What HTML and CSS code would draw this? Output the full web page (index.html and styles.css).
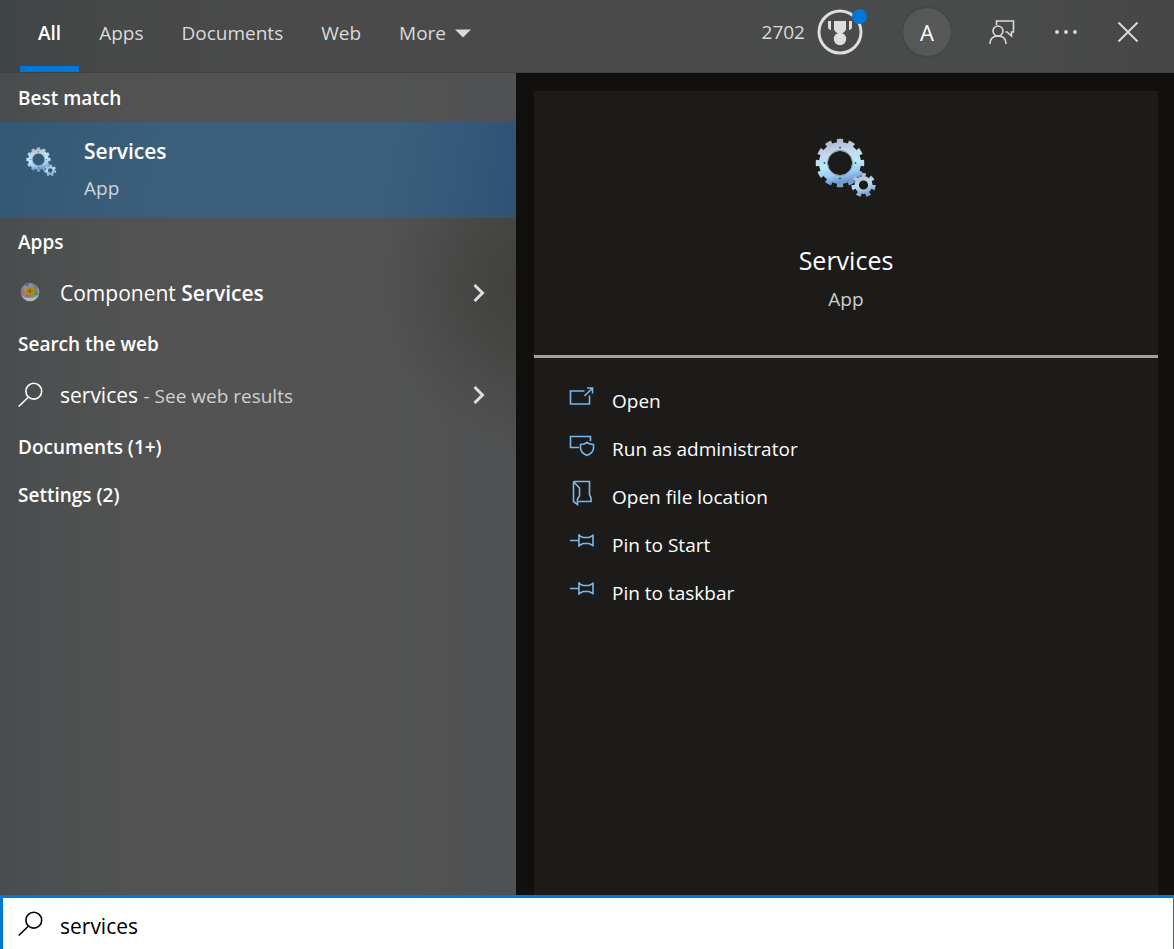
FILE: index.html
```html
<!DOCTYPE html>
<html lang="en">
<head>
<meta charset="utf-8">
<meta name="viewport" content="width=device-width, initial-scale=1">
<title>Search</title>
<link rel="stylesheet" href="styles.css">
</head>
<body>
<svg class="defs" width="0" height="0" aria-hidden="true">
  <defs>
    <linearGradient id="metal" gradientUnits="userSpaceOnUse" x1="20" y1="0" x2="30" y2="50">
      <stop offset="0" stop-color="#a9b2cc"/>
      <stop offset=".28" stop-color="#c3d6e8"/>
      <stop offset=".52" stop-color="#b9ebf8"/>
      <stop offset=".72" stop-color="#9cc8f0"/>
      <stop offset=".86" stop-color="#6f9bd3"/>
      <stop offset="1" stop-color="#86a2c0"/>
    </linearGradient>
    <linearGradient id="metal-small" gradientUnits="userSpaceOnUse" x1="44" y1="35" x2="52" y2="59">
      <stop offset="0" stop-color="#aab4cc"/>
      <stop offset=".5" stop-color="#b8dcf2"/>
      <stop offset="1" stop-color="#6f96c8"/>
    </linearGradient>
    <radialGradient id="sphere" cx=".4" cy=".3" r=".7">
      <stop offset="0" stop-color="#a8a8a8"/>
      <stop offset=".6" stop-color="#777"/>
      <stop offset="1" stop-color="#b4b4b4"/>
    </radialGradient>
    <symbol id="gears" viewBox="0 0 62 60">
      <g fill="none" stroke="url(#metal)">
        <circle cx="25" cy="25" r="16.5" stroke-width="9"/>
        <circle cx="25" cy="25" r="22" stroke-width="4.5" pathLength="24" stroke-dasharray="1.1 .9" stroke-dashoffset=".55"/>
      </g>
      <g fill="none" stroke="url(#metal-small)">
        <circle cx="48.5" cy="47" r="6.8" stroke-width="4.4"/>
        <circle cx="48.5" cy="47" r="10.2" stroke-width="3.8" pathLength="14" stroke-dasharray="1 1"/>
      </g>
      <circle cx="25" cy="25" r="12.6" fill="none" stroke="#7d97a8" stroke-width="1"/>
      <g fill="#35546a"><circle cx="25" cy="9.5" r="1"/><circle cx="25" cy="40.5" r="1"/><circle cx="9.5" cy="25" r="1"/><circle cx="40.5" cy="25" r="1"/></g>
    </symbol>
    <symbol id="lens" viewBox="0 0 26 26">
      <path d="M10 15.500.7 24.500" fill="none" stroke="currentColor" stroke-width="1.6"/>
      <circle cx="15.800" cy="9.200" r="7.900" fill="none" stroke="currentColor" stroke-width="1.6"/>
    </symbol>
    <symbol id="chevron" viewBox="0 0 12 18">
      <path d="m1.5 1 8 8-8 8" fill="none" stroke="currentColor" stroke-width="3"/>
    </symbol>
    <symbol id="pin" viewBox="0 0 26 26">
      <path d="M1 12.5h9M10 6v13M10 7.5l4 2h6l4-2M10 17.500l4-2h6l4 2M24 6.500v12" fill="none" stroke="currentColor" stroke-width="1.6"/>
    </symbol>
  </defs>
</svg>
<div class="search-window">
  <header class="topbar">
    <nav class="tabs" aria-label="Search scope">
      <button class="tab tab-active">All</button>
      <button class="tab">Apps</button>
      <button class="tab">Documents</button>
      <button class="tab">Web</button>
      <button class="tab">More <svg class="caret" viewBox="0 0 16 9" aria-hidden="true"><path d="M0 .5h16L8 8.500z" fill="currentColor"/></svg></button>
    </nav>
    <div class="account">
      <button class="rewards">2702
        <svg class="medal" viewBox="0 0 50 48" aria-hidden="true">
          <circle cx="23" cy="25" r="21" fill="none" stroke="#dedede" stroke-width="3"/>
          <path d="M17 14h12v9l-3 3h-6l-3-3zM11 14h3v9h-1l-2-2zM32 14h3v7l-2 2h-1z" fill="#dedede"/>
          <circle cx="23" cy="32" r="6.2" fill="#dedede"/>
          <circle cx="42.500" cy="9.500" r="7.500" fill="#0078d7"/>
        </svg>
      </button>
      <button class="avatar">A</button>
      <button class="tool" aria-label="Feedback"><svg class="feedback" viewBox="0 0 26 26" aria-hidden="true"><g fill="none" stroke="currentColor" stroke-width="1.600"><path d="M7.500 6V2h17v11h-2v4l-4.500-4h-1.500"/><circle cx="9" cy="12" r="5"/><path d="M1 25c0-5 3-8 8-8s8 3 8 8"/></g></svg></button>
      <button class="tool" aria-label="Options"><svg class="dots" viewBox="0 0 26 6" aria-hidden="true"><g fill="currentColor"><circle cx="4" cy="3" r="1.900"/><circle cx="13" cy="3" r="1.900"/><circle cx="22" cy="3" r="1.900"/></g></svg></button>
      <button class="tool" aria-label="Close"><svg class="close" viewBox="0 0 22 22" aria-hidden="true"><path d="m1.500 1.500 19 19m0-19-19 19" fill="none" stroke="currentColor" stroke-width="1.900"/></svg></button>
    </div>
  </header>

  <main class="content">
    <section class="results" aria-label="Results">
      <h2 class="group">Best match</h2>
      <button class="best">
        <svg class="gears-small" aria-hidden="true"><use href="#gears"/></svg>
        <span class="best-text"><strong>Services</strong><span class="kind">App</span></span>
      </button>
      <h2 class="group">Apps</h2>
      <button class="result">
        <svg class="component" viewBox="0 0 20 20" aria-hidden="true">
          <circle cx="10" cy="10" r="9.300" fill="url(#sphere)"/>
          <path d="M2 14a9 9 0 0 0 16 0c-4 3-12 3-16 0" fill="#b8b8b8"/>
          <circle cx="10" cy="9" r="4.500" fill="#b48a18"/><path d="M10 6v6M7 9h6" stroke="#7a5b0e"/>
          <circle cx="7" cy="2.800" r="2" fill="#6064c8"/><circle cx="4" cy="12.500" r="1.700" fill="#d66"/><circle cx="16.500" cy="11.500" r="1.900" fill="#36a146"/>
        </svg>
        <span class="result-text">Component <strong>Services</strong></span>
        <svg class="chevron" aria-hidden="true"><use href="#chevron"/></svg>
      </button>
      <h2 class="group">Search the web</h2>
      <button class="result">
        <svg class="lens" aria-hidden="true"><use href="#lens"/></svg>
        <span class="result-text">services <span class="hint">- See web results</span></span>
        <svg class="chevron" aria-hidden="true"><use href="#chevron"/></svg>
      </button>
      <h2 class="group">Documents (1+)</h2>
      <h2 class="group">Settings (2)</h2>
    </section>

    <section class="preview" aria-label="Services">
      <div class="card">
        <div class="summary">
          <svg class="gears-large" aria-hidden="true"><use href="#gears"/></svg>
          <h1 class="title">Services</h1>
          <p class="subtitle">App</p>
        </div>
        <div class="actions">
          <button class="action"><svg class="action-icon" viewBox="0 0 26 26" aria-hidden="true"><path d="M15.500 7H1.500v13h19v-8.500M15.500 12l8-8M18 4h5.500v5.500" fill="none" stroke="currentColor" stroke-width="1.600"/></svg>Open</button>
          <button class="action"><svg class="action-icon" viewBox="0 0 26 26" aria-hidden="true"><path d="M10 15.500H1.500v-11H21.500V9M18 10.500c-2 1.500-4 2-6.500 2v3.500c0 3.500 3 6 6.500 7.500 3.500-1.500 6.500-4 6.500-7.500v-3.500c-2.500 0-4.500-.5-6.500-2z" fill="none" stroke="currentColor" stroke-width="1.600"/></svg>Run as administrator</button>
          <button class="action"><svg class="action-icon" viewBox="0 0 26 26" aria-hidden="true"><path d="M4.500 1.500h16v13l1.500 3.500V21.500H9.500M4.500 1.500v20L8.500 24.500V19l2-3V8l-6-6.500" fill="none" stroke="currentColor" stroke-width="1.600"/></svg>Open file location</button>
          <button class="action"><svg class="action-icon" aria-hidden="true"><use href="#pin"/></svg>Pin to Start</button>
          <button class="action"><svg class="action-icon" aria-hidden="true"><use href="#pin"/></svg>Pin to taskbar</button>
        </div>
      </div>
    </section>
  </main>

  <label class="searchbox">
    <svg class="lens" aria-hidden="true"><use href="#lens"/></svg>
    <input class="query" type="text" value="services" aria-label="Search">
  </label>
</div>
</body>
</html>
```
FILE: styles.css
```css
* { box-sizing: border-box; }

body {
  margin: 0;
  font-family: "Open Sans", "Noto Sans", sans-serif;
  font-size: 19px;
  line-height: 24px;
  color: #fff;
}

button {
  margin: 0;
  padding: 0;
  border: 0;
  background: none;
  color: inherit;
  font: inherit;
  text-align: left;
}

h1, h2, p { margin: 0; }
strong { font-weight: 600; }
svg { display: block; flex: none; }
.defs { position: absolute; }

.search-window {
  display: flex;
  flex-direction: column;
  min-height: 100vh;
  background: #525252;
}

.topbar {
  display: flex;
  justify-content: space-between;
  height: 73px;
  padding: 0 35px 0 20px;
  border-bottom: 1px solid #414141;
  background: linear-gradient(90deg, #3f4445 0, #474848 110px, #4a4a4a 300px, #4a4a4a 700px, #494b4a 1000px, #464646 100%);
  color: #dadada;
}

.tabs { display: flex; gap: 2px; }

.tab {
  display: flex;
  align-items: center;
  gap: 9px;
  padding: 0 18px 6px;
  border-bottom: 0 solid #0078d7;
}

.tab-active {
  padding-bottom: 0;
  border-bottom-width: 6px;
  color: #fff;
  font-weight: 600;
}

.caret { width: 16px; height: 9px; }

.account {
  display: flex;
  align-items: center;
  padding-bottom: 8px;
}

.rewards { display: flex; align-items: center; gap: 12px; }
.medal { width: 50px; height: 48px; margin-bottom: 2px; }

.avatar {
  width: 48px;
  height: 48px;
  margin: 0 38px 0 36px;
  border-radius: 50%;
  background: #575858;
  box-shadow: 0 0 2px #333;
  color: #fff;
  font-size: 22px;
  text-align: center;
}

.tool + .tool { margin-left: 38px; }
.feedback { width: 26px; height: 26px; }
.dots { width: 26px; height: 6px; }
.close { width: 22px; height: 22px; }

.content {
  display: flex;
  flex: 1;
}

.results {
  flex: 0 0 516px;
  padding-top: 1px;
  background:
    radial-gradient(ellipse 160px 170px at 540px 210px, #403f3c 0, #403f3cb0 40%, #403f3c40 75%, transparent 100%),
    linear-gradient(90deg, #474c4e 0, #4d5050 50px, #525252 130px, #535353 320px, #505152 100%);
}

.group {
  padding: 12px 18px;
  font-size: 19px;
  font-weight: 600;
}

.best {
  display: flex;
  width: 100%;
  height: 96px;
  padding: 13px 26px;
  gap: 28px;
  background: linear-gradient(100deg, #335873 0, #3b5f7b 30%, #3a5f7c 75%, #2f5274 100%);
}

.best-text {
  display: grid;
  gap: 4px;
  font-size: 21px;
  line-height: 32px;
}

.gears-small { width: 31px; height: 30px; margin-top: 12px; margin-right: -1px; }
.kind { color: #cdd5dc; font-size: 19px; }

.result {
  display: flex;
  align-items: center;
  width: 100%;
  height: 54px;
  padding: 0 31px 1px 18px;
}

.group + .result:nth-of-type(3) { height: 55px; }

.result-text { flex: 1; font-size: 21px; }
.hint { color: #d0d0d0; font-size: 19px; }
.component { width: 20px; height: 20px; margin: 0 20px 2px 2px; }
.lens { width: 26px; height: 26px; margin-right: 16px; }
.chevron { width: 12px; height: 18px; color: #dedede; }

.preview {
  display: flex;
  flex: 1;
  padding: 18px 16px 0 18px;
  background: #11100e;
}

.card { flex: 1; background: #1c1b19; }

.summary {
  display: flex;
  flex-direction: column;
  align-items: center;
  height: 267px;
  padding-top: 47px;
  border-bottom: 3px solid #a5a09f;
}

.gears-large { width: 62px; height: 60px; }
.title { margin-top: 44px; font-size: 25px; font-weight: 400; line-height: 36px; }
.subtitle { margin-top: 9px; color: #cfcfcf; }

.actions {
  display: grid;
  padding: 19px 35px;
}

.action {
  display: flex;
  align-items: center;
  height: 48px;
  gap: 17px;
}

.action-icon { width: 26px; height: 26px; margin-bottom: 8px; color: #76b9ed; }

.searchbox {
  display: flex;
  align-items: center;
  height: 54px;
  padding: 4px 16px 0 15px;
  border: 3px solid #0078d7;
  border-width: 3px 1px 0 3px;
  background: #fff;
  color: #000;
}

.searchbox .lens { margin-bottom: 4px; }

.query {
  flex: 1;
  padding: 0;
  border: 0;
  outline: 0;
  background: none;
  color: inherit;
  font: inherit;
  font-size: 21px;
}
```
